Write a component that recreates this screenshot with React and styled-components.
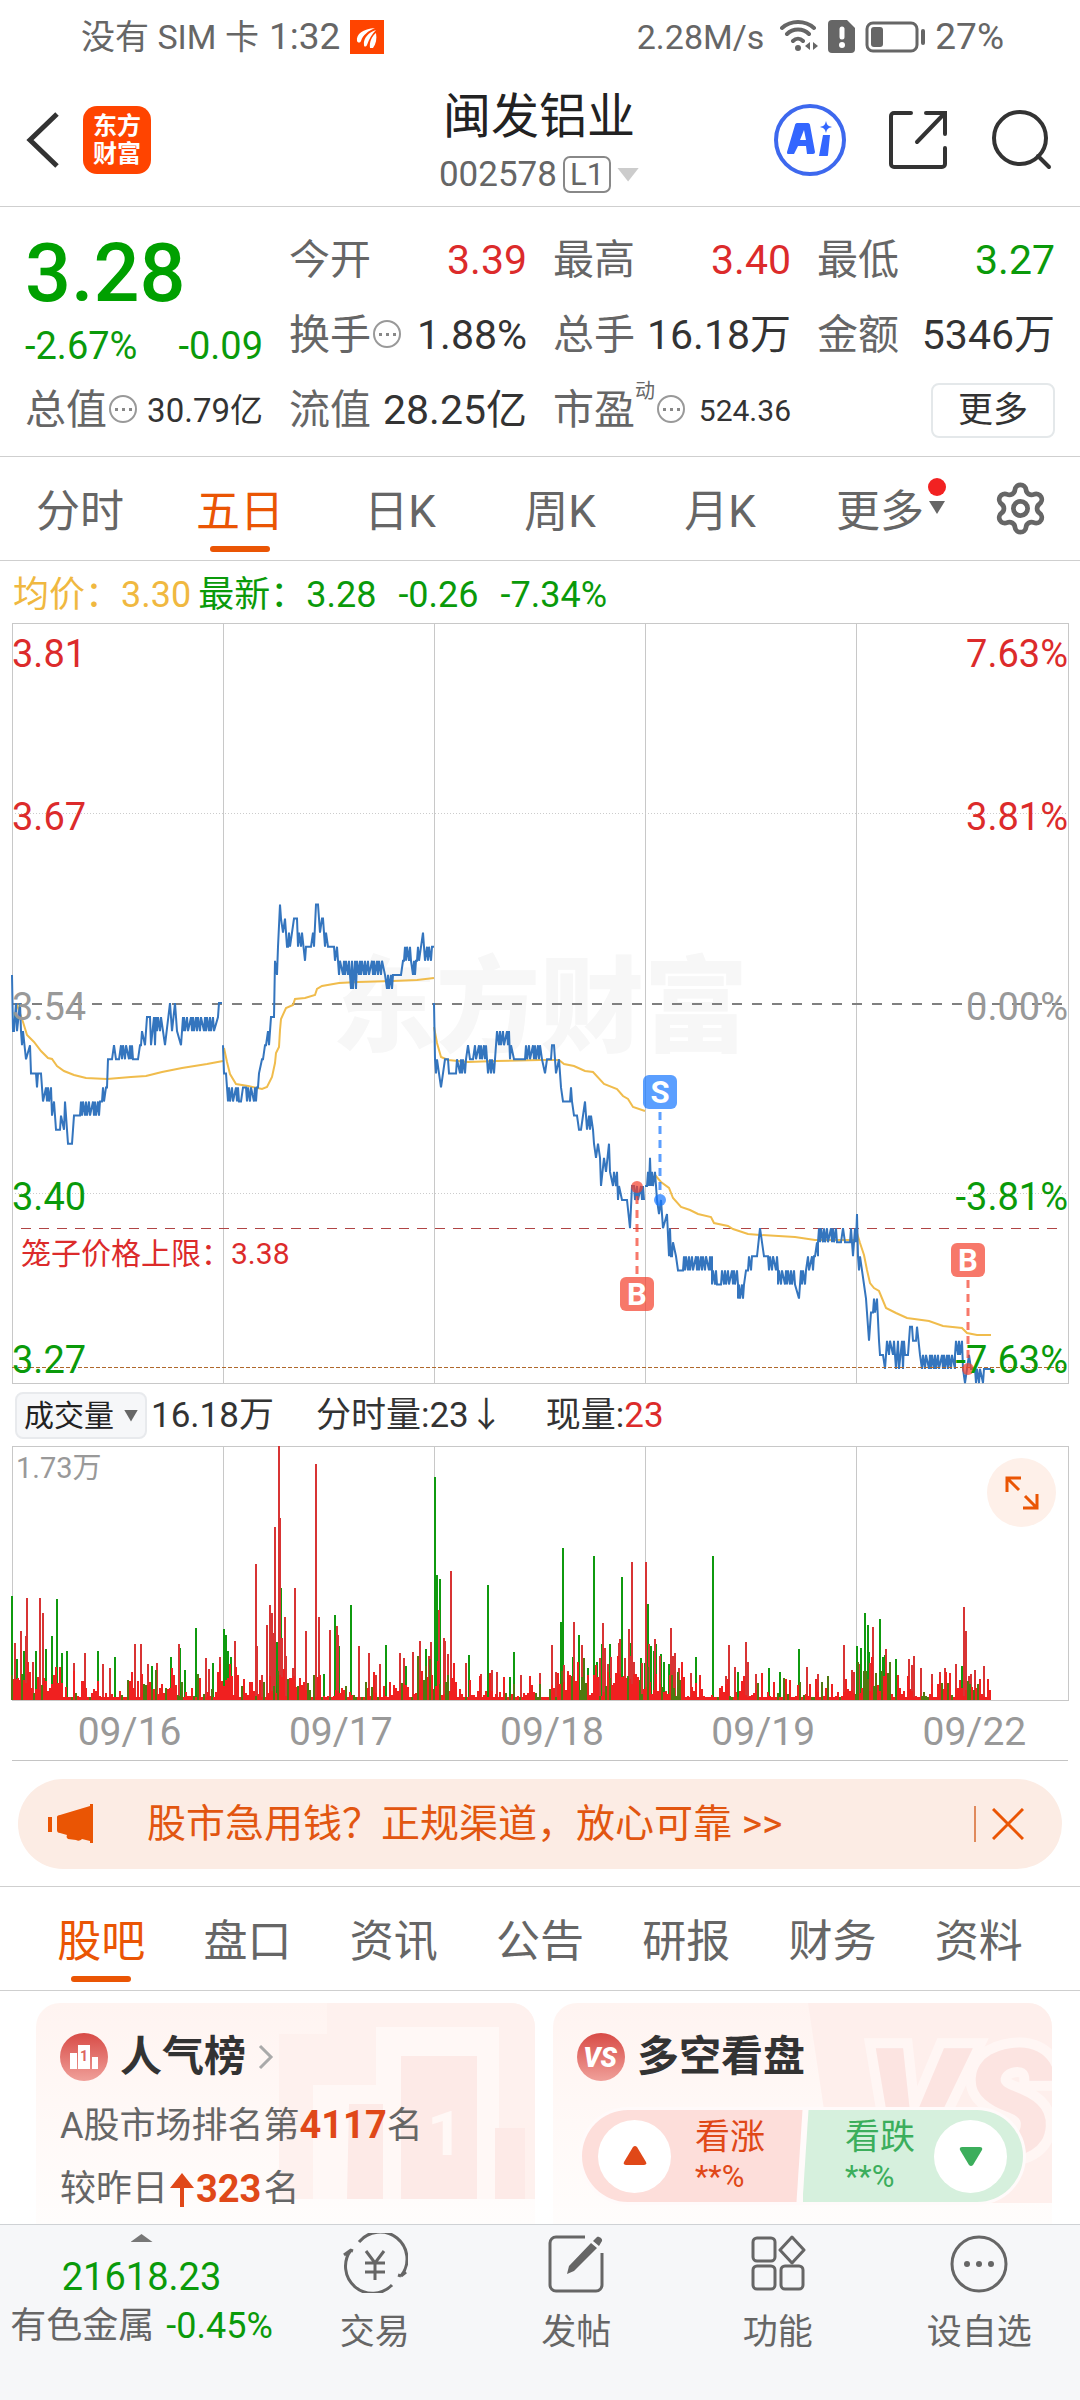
import styled, { createGlobalStyle } from "styled-components";
import { Settings } from "lucide-react";

const RED = "#dc2b2b";
const GREEN = "#0a9a0a";
const ORANGE = "#ea5504";
const GREY = "#666666";
const INK = "#333333";
const LINE = "#cfcfcf";

const GlobalStyle = createGlobalStyle`
  * {
    box-sizing: border-box;
  }
  body {
    margin: 0;
    background: #ffffff;
    color: ${INK};
    font-family: Roboto, "Noto Sans CJK SC", sans-serif;
    line-height: 1.2;
  }
  button, select {
    margin: 0;
    padding: 0;
    border: 0;
    background: none;
    color: inherit;
    font: inherit;
    cursor: pointer;
  }
  h1, h2, p {
    margin: 0;
    font: inherit;
  }
  svg {
    display: block;
    flex: none;
  }
`;

/* ---------- data ---------- */

const CHART_W = 1056;
const PRICE_H = 760;
const VOLUME_H = 254;
const DAY_W = 211;

// [x, price] is a point, [from, to, low, high] is a stretch that flickers between two prices
const PRICES = [
  [
    [0, 356], [1, 352], [2, 8, 352, 354], [9, 352], [10, 12, 351, 352], [14, 350], [18, 351], [19, 349],
    [24, 349], [25, 348], [26, 349], [29, 349], [31, 39, 347, 348], [40, 346], [42, 347], [44, 345], [48, 345],
    [48, 52, 345, 346], [53, 347], [54, 346], [56, 344], [60, 344], [62, 346], [67, 346], [68, 88, 346, 347],
    [90, 94, 347, 348], [95, 348], [96, 350], [100, 350], [102, 351], [104, 350], [107, 120, 350, 351],
    [121, 350], [126, 350], [128, 351], [129, 133, 351, 352], [135, 353], [138, 353], [139, 144, 351, 353],
    [145, 150, 352, 353], [153, 351], [158, 354], [160, 352], [163, 354], [165, 352], [169, 351], [171, 353],
    [171, 203, 352, 353], [206, 353], [207, 354], [210, 354],
  ],
  [
    [211, 351], [212, 349], [214, 349], [216, 228, 347, 348], [229, 347], [231, 348], [234, 348],
    [235, 245, 347, 348], [246, 249, 348, 349], [250, 350], [251, 253, 350, 351], [254, 257, 351, 352],
    [259, 353], [262, 353], [263, 357], [265, 356], [266, 358], [268, 361], [269, 360], [271, 359], [273, 360],
    [275, 358], [276, 280, 358, 359], [282, 360], [285, 360], [286, 290, 358, 359], [293, 357], [294, 358],
    [299, 358], [299, 303, 358, 359], [304, 361], [306, 361], [308, 359], [310, 360], [311, 360],
    [313, 316, 358, 359], [316, 358], [322, 358], [323, 326, 357, 358], [327, 338, 356, 357],
    [339, 346, 355, 357], [347, 373, 356, 357], [375, 382, 355, 356], [383, 356], [389, 356], [391, 357],
    [392, 399, 357, 358], [401, 405, 356, 357], [405, 408, 357, 358], [411, 359], [412, 358],
    [413, 421, 357, 358], [422, 358],
  ],
  [
    [422, 354], [423, 350], [424, 426, 349, 350], [429, 348], [431, 349], [433, 350], [436, 350], [437, 349],
    [442, 349], [444, 453, 349, 350], [454, 350], [456, 351], [458, 350], [461, 475, 350, 351],
    [476, 483, 349, 350], [484, 497, 351, 352], [498, 502, 350, 351], [503, 350], [512, 350],
    [513, 528, 350, 351], [530, 350], [533, 349], [535, 350], [539, 350], [540, 351], [542, 351],
    [544, 547, 349, 350], [549, 348], [551, 347], [557, 347], [558, 561, 347, 348], [562, 564, 346, 347],
    [565, 346], [567, 345], [569, 345], [573, 347], [574, 346], [575, 581, 345, 346], [582, 344],
    [584, 586, 343, 344], [588, 343], [589, 592, 341, 343], [594, 342], [597, 344], [598, 600, 342, 343],
    [601, 605, 341, 342], [606, 610, 340, 341], [611, 340], [615, 340], [618, 338], [620, 341], [622, 341],
    [623, 633, 340, 341],
  ],
  [
    [633, 341], [635, 637, 341, 342], [638, 343], [639, 643, 341, 342], [645, 340], [647, 339],
    [647, 650, 339, 340], [651, 338], [655, 339], [657, 660, 336, 338], [660, 664, 336, 337], [666, 335],
    [670, 335], [671, 700, 335, 336], [700, 705, 334, 335], [706, 334], [709, 334], [709, 726, 334, 335],
    [726, 733, 333, 334], [734, 335], [736, 740, 335, 336], [745, 336], [748, 338], [752, 336], [756, 336],
    [757, 766, 335, 336], [766, 783, 334, 335], [787, 333], [788, 793, 334, 335], [794, 802, 335, 336],
    [803, 806, 336, 337], [806, 824, 337, 338], [825, 337], [829, 337], [831, 338], [833, 337], [838, 337],
    [839, 338], [841, 336], [842, 844, 337, 338], [845, 339],
    [846, 336], [847, 850, 335, 336], [852, 334], [854, 333], [857, 330], [859, 332], [861, 865, 332, 333],
    [867, 330], [868, 329], [871, 329], [873, 328], [874, 883, 329, 330], [884, 892, 328, 330], [893, 329],
    [896, 329], [898, 331], [900, 331], [901, 330], [904, 330], [905, 331], [908, 329],
    [910, 943, 328, 329], [943, 950, 329, 330], [951, 328], [953, 327], [955, 328], [957, 329], [959, 328],
    [963, 328], [964, 972, 327, 328], [973, 328], [979, 328],
  ],
];

const AVERAGES = [
  "5,382 11,399 15,412 22,419 29,428 36,435 40,436 45,443 52,448 62,452 74,455 95,456 119,454 134,453 150,449 170,445 195,441 211,438",
  "212,425 215,439 218,451 224,461 236,463 250,466 255,464 260,454 263,440 264,430 267,424 268,407 269,396 274,385 281,382 283,376 293,375 303,372 305,366 310,363 327,360 346,359 381,358 405,357 422,355",
  "422,404 425,420 429,434 436,437 456,439 484,438 528,437 547,437 552,441 562,443 573,448 581,449 592,461 605,466 611,473 616,476 621,484 633,488",
  "643,552 649,559 657,565 661,575 669,584 678,587 686,591 699,594 702,600 716,603 721,606 736,611 748,612 783,614 803,617 844,617",
  "845,610 848,620 852,632 855,647 858,660 862,665 867,668 874,685 884,690 895,695 917,698 931,703 950,705 955,710 965,712 979,712",
];

const TRADES = [
  { side: "S", x: 648, boxY: 469, dotY: 577, color: "#1677ff" },
  { side: "B", x: 625, boxY: 671, dotY: 564, color: "#f5402c" },
  { side: "B", x: 956, boxY: 637, dotY: 746, color: "#f5402c" },
];

const RISE_BARS = [
  [3, 57], [9, 69], [14, 64], [15, 102], [21, 38], [28, 102], [31, 87], [62, 37], [73, 47], [91, 36], [98, 32],
  [123, 56], [129, 56], [136, 36], [145, 37], [167, 56], [194, 42], [197, 31], [208, 43], [223, 59], [244, 136],
  [245, 54], [250, 25], [255, 75], [258, 95], [260, 87], [262, 67], [263, 173], [267, 254], [268, 182],
  [270, 62], [273, 83], [274, 44], [281, 32], [283, 112], [294, 69], [304, 236], [307, 83], [318, 70],
  [325, 74], [326, 65], [347, 54], [357, 47], [364, 25], [368, 36], [388, 47], [392, 42], [401, 48], [406, 40],
  [408, 59], [417, 44], [419, 58], [427, 90], [432, 62], [433, 59], [436, 46], [439, 129], [442, 23],
  [454, 37], [469, 26], [480, 30], [485, 28], [509, 25], [528, 27], [540, 55], [544, 28], [552, 35], [556, 29],
  [562, 78], [570, 55], [572, 41], [588, 42], [591, 77], [593, 52], [596, 36], [599, 43], [607, 57], [608, 61],
  [613, 42], [617, 71], [619, 44], [620, 138], [622, 38], [630, 37], [634, 138], [637, 56], [643, 61],
  [648, 44], [659, 72], [661, 44], [663, 47], [667, 32], [679, 27], [714, 24], [717, 55], [723, 33], [734, 58],
  [736, 38], [744, 26], [795, 33], [806, 26], [832, 55], [840, 30], [842, 28], [847, 36], [858, 37], [861, 73],
  [874, 51], [897, 41], [900, 35], [902, 44], [909, 32], [920, 26], [928, 28], [933, 32], [944, 36], [952, 93],
  [954, 69], [957, 24], [959, 26], [963, 30], [972, 34],
];

const FALL_BARS = [
  [0, 104], [5, 41], [12, 49], [24, 49], [34, 51], [40, 64], [45, 101], [50, 47], [55, 49], [86, 49],
  [103, 43], [140, 34], [159, 43], [168, 52], [173, 30], [184, 72], [201, 37], [212, 71], [214, 65], [216, 49],
  [219, 43], [265, 58], [269, 112], [308, 22], [312, 26], [323, 85], [327, 54], [339, 95], [374, 55],
  [394, 34], [414, 51], [423, 223], [425, 125], [428, 121], [457, 45], [476, 115], [498, 23], [502, 48],
  [549, 78], [551, 152], [561, 43], [567, 65], [576, 32], [582, 144], [585, 38], [590, 56], [598, 56],
  [610, 123], [618, 57], [629, 42], [633, 37], [636, 96], [639, 54], [642, 49], [644, 56], [649, 46],
  [652, 38], [657, 36], [684, 43], [701, 144], [726, 28], [757, 32], [768, 28], [787, 51], [845, 54],
  [849, 52], [853, 87], [856, 75], [857, 48], [868, 81], [871, 43], [873, 45], [884, 41], [950, 34],
];

// stretches where trading is busier than usual: [from, to, extra height]
const BUSY = [
  [0, 50, 24], [130, 170, 12], [200, 225, 20], [255, 283, 30], [405, 442, 32], [545, 670, 24], [845, 880, 26],
  [945, 966, 16],
];

const QUOTES = [
  { label: "今开", value: "3.39", color: RED },
  { label: "最高", value: "3.40", color: RED },
  { label: "最低", value: "3.27", color: GREEN },
  { label: "换手", value: "1.88%", info: true },
  { label: "总手", value: "16.18万" },
  { label: "金额", value: "5346万" },
  { label: "总值", value: "30.79亿", info: true, size: 33 },
  { label: "流值", value: "28.25亿" },
  { label: "市盈", mark: "动", value: "524.36", info: true, size: 30 },
];

const PERIODS = ["分时", "五日", "日K", "周K", "月K", "更多"];
const DATES = ["09/16", "09/17", "09/18", "09/19", "09/22"];
const SECTIONS = ["股吧", "盘口", "资讯", "公告", "研报", "财务", "资料"];

/* ---------- chart helpers ---------- */

const priceY = (cents) => ((381 - cents) * PRICE_H) / 54;

const FLICKER = [1, 1, 2, 1, 3, 1, 1, 1, 2];

function pricePoints(day) {
  const points = [];
  day.forEach((item) => {
    if (item.length === 2) {
      points.push([item[0], item[1]]);
      return;
    }
    const [from, to, low, high] = item;
    let up = false;
    for (let x = from, i = from; x <= to; x += FLICKER[i % FLICKER.length], i += 1) {
      points.push([x, up ? high : low]);
      up = !up;
    }
  });
  return points.map(([x, cents]) => `${x},${priceY(cents).toFixed(1)}`).join(" ");
}

function quietBars() {
  const bars = [];
  let seed = 7;
  const random = () => {
    seed = (seed * 16807) % 2147483647;
    return seed / 2147483647;
  };
  for (let x = 0; x <= 979; x += 2) {
    const busy = BUSY.find(([from, to]) => x >= from && x <= to);
    const height = 3 + random() ** 4 * 26 + (busy ? random() * busy[2] : 0);
    const fall = random() < (busy ? 0.34 : 0.2);
    bars.push([x, Math.round(height), fall ? "#4f7a10" : "#f02020"]);
  }
  return bars;
}

const barPath = (bars) => bars.map(([x, h]) => `M${x} ${VOLUME_H}v${-h}`).join("");

/* ---------- layout ---------- */

const Page = styled.div`
  min-height: 100vh;
  display: flex;
  flex-direction: column;
`;

const StatusBar = styled.div`
  height: 75px;
  padding: 0 76px 0 81px;
  display: flex;
  align-items: center;
  justify-content: space-between;
  color: ${GREY};
`;

const StatusGroup = styled.div`
  display: flex;
  align-items: center;
  gap: 10px;
  font-size: 34px;
`;

const StatusStrong = styled.span`
  font-size: 37px;
`;

const NetSpeed = styled.span`
  margin-right: 6px;
`;

const Header = styled.header`
  height: 132px;
  padding: 0 28px 0 26px;
  display: grid;
  grid-template-columns: 1fr auto 1fr;
  align-items: center;
  border-bottom: 1px solid ${LINE};
`;

const HeaderSide = styled.div`
  display: flex;
  align-items: center;
  gap: ${(p) => p.$gap}px;
  padding-bottom: 2px;
  justify-content: ${(p) => (p.$end ? "flex-end" : "flex-start")};
`;

const BrandLogo = styled.a`
  width: 68px;
  height: 68px;
  border-radius: 14px;
  background: #ff4400;
  color: #ffffff;
  display: flex;
  align-items: center;
  justify-content: center;
  text-align: center;
  text-decoration: none;
  font-size: 24px;
  font-weight: 700;
  line-height: 28px;
`;

const TitleBlock = styled.div`
  padding-top: 5px;
  display: flex;
  flex-direction: column;
  align-items: center;
  gap: 3px;
`;

const StockName = styled.h1`
  font-size: 48px;
  line-height: 60px;
  color: #222222;
`;

const StockCode = styled.button`
  display: flex;
  align-items: center;
  gap: 6px;
  font-size: 35px;
  line-height: 50px;
  color: ${GREY};
`;

const LevelTag = styled.span`
  padding: 0 5px;
  border: 2px solid #888888;
  border-radius: 7px;
  font-size: 31px;
  line-height: 33px;
`;

const Triangle = styled.span`
  width: ${(p) => p.$size * 2}px;
  height: ${(p) => p.$tall || p.$size * 2}px;
  background: ${(p) => p.$color};
  clip-path: ${(p) => (p.$up ? "polygon(50% 0, 100% 100%, 0 100%)" : "polygon(0 0, 100% 0, 50% 100%)")};
`;

const QuotePanel = styled.section`
  padding: 16px 25px 8px;
  display: grid;
  grid-template-columns: repeat(4, 1fr);
  grid-auto-rows: 75px;
  column-gap: 26px;
  border-bottom: 1px solid ${LINE};
`;

const LastPrice = styled.div`
  grid-row: span 2;
  display: flex;
  flex-direction: column;
  padding-top: 5px;
  color: ${GREEN};
`;

const BigPrice = styled.strong`
  font-size: 81px;
  font-weight: 500;
  line-height: 92px;
  color: #00a000;
`;

const Change = styled.div`
  display: flex;
  justify-content: space-between;
  font-size: 38px;
  line-height: 52px;
`;

const Quote = styled.div`
  display: flex;
  align-items: center;
  white-space: nowrap;
`;

const QuoteLabel = styled.span`
  font-size: 41px;
  color: ${GREY};
`;

const QuoteMark = styled.sup`
  align-self: flex-start;
  font-size: 20px;
  line-height: 36px;
  color: ${GREY};
`;

const QuoteValue = styled.span`
  margin-left: auto;
  font-size: ${(p) => p.$size || 41}px;
  color: ${(p) => p.$color || INK};
`;

const MoreButton = styled.button`
  justify-self: end;
  align-self: center;
  width: 124px;
  height: 55px;
  border: 2px solid #e4e8ea;
  border-radius: 8px;
  font-size: 35px;
`;

const Periods = styled.nav`
  height: 104px;
  display: grid;
  grid-template-columns: repeat(6, 4fr) 3fr;
  border-bottom: 1px solid ${LINE};
`;

const Tab = styled.button`
  position: relative;
  padding-top: 8px;
  font-size: 44px;
  color: ${(p) => (p.$active ? ORANGE : GREY)};

  &::after {
    content: "";
    position: absolute;
    left: 50%;
    bottom: 8px;
    width: 60px;
    height: 6px;
    margin-left: -30px;
    border-radius: 3px;
    background: ${(p) => (p.$active ? ORANGE : "transparent")};
  }
`;

const TabBadge = styled.span`
  position: absolute;
  top: 21px;
  right: 14px;
  display: flex;
  flex-direction: column;
  align-items: center;
  gap: 5px;
`;

const NewDot = styled.span`
  width: 18px;
  height: 18px;
  border-radius: 50%;
  background: #f22222;
`;

const IconButton = styled.button`
  display: flex;
  align-items: center;
  justify-content: center;
  color: ${(p) => p.$color || INK};
`;

const PriceLegend = styled.div`
  height: 62px;
  padding: 7px 13px 0;
  display: flex;
  align-items: center;
  font-size: 36px;
  color: ${GREEN};
`;

const LegendAverage = styled.span`
  margin-right: 7px;
  color: #f0b840;
`;

const LegendItem = styled.span`
  margin-right: 22px;
`;

const ChartFrame = styled.div`
  position: relative;
  margin: 0 12px;
`;

const ChartSvg = styled.svg`
  position: relative;
  width: 100%;
  height: ${(p) => p.$height}px;
  overflow: visible;
`;

const Watermark = styled.div`
  position: absolute;
  inset: 0;
  padding-top: 12px;
  display: flex;
  align-items: center;
  justify-content: center;
  font-size: 104px;
  font-weight: 900;
  color: #f7f7f7;
`;

const Axis = styled.div`
  position: absolute;
  inset: 0;
  padding: 8px 0 0;
  display: grid;
  grid-template-rows: 91fr 190fr 190fr 190fr 91fr;
  align-items: center;
  justify-items: ${(p) => p.$side};
  pointer-events: none;
  font-size: 38px;
  line-height: 46px;
`;

const AxisLabel = styled.span`
  color: ${(p) => p.$color};

  &:first-child {
    align-self: start;
  }
  &:last-child {
    align-self: end;
  }
`;

const CageLabel = styled.span`
  position: absolute;
  left: 9px;
  top: 613px;
  font-size: 30px;
  line-height: 36px;
  color: ${RED};
`;

const VolumeLegend = styled.div`
  height: 63px;
  padding: 2px 15px 0;
  display: flex;
  align-items: center;
  font-size: 35px;
`;

const SelectBox = styled.label`
  position: relative;
  display: flex;
  align-items: center;
  margin-right: 4px;

  ${Triangle} {
    position: absolute;
    right: 9px;
    pointer-events: none;
  }
`;

const Select = styled.select`
  appearance: none;
  width: 132px;
  height: 47px;
  padding-left: 7px;
  border: 2px solid #e8eaed;
  border-radius: 8px;
  background: #f6f7f9;
  font-size: 30px;
  color: #222222;
`;

const VolumeItem = styled.span`
  margin-right: 42px;
  color: ${INK};

  b {
    font-weight: 400;
    color: ${RED};
  }
`;

const VolumeMax = styled.span`
  position: absolute;
  left: 4px;
  top: 4px;
  font-size: 29px;
  line-height: 36px;
  color: #999999;
`;

const ExpandButton = styled(IconButton)`
  position: absolute;
  right: 12px;
  top: 12px;
  width: 69px;
  height: 69px;
  border-radius: 50%;
  background: #fef0e9;
  color: ${ORANGE};
`;

const DateRow = styled.div`
  margin: 0 12px;
  height: 61px;
  padding-top: 5px;
  display: grid;
  grid-template-columns: repeat(5, 1fr);
  align-items: center;
  border-bottom: 1px solid #c4c4c4;
  font-size: 39px;
  color: #999999;

  span {
    padding-left: 24px;
    text-align: center;
  }
`;

const BannerWrap = styled.div`
  padding: 18px 18px 17px;
  border-bottom: 1px solid ${LINE};
`;

const Banner = styled.div`
  height: 90px;
  padding: 0 38px 0 30px;
  display: flex;
  align-items: center;
  border-radius: 45px;
  background: #fcece4;
  color: #e25610;
`;

const BannerLink = styled.a`
  flex: 1;
  margin-left: 53px;
  font-size: 39px;
  color: inherit;
  text-decoration: none;
`;

const BannerClose = styled(IconButton)`
  height: 36px;
  padding-left: 16px;
  border-left: 2px solid #e08a5c;
  color: ${ORANGE};
`;

const SectionTabs = styled(Periods)`
  padding: 0 28px;
  grid-template-columns: repeat(7, 1fr);
`;

const Cards = styled.section`
  flex: 1;
  padding: 12px 28px 0 36px;
  display: grid;
  grid-template-columns: 1fr 1fr;
  gap: 18px;
`;

const Card = styled.article`
  position: relative;
  overflow: hidden;
  padding: 30px 24px 0;
  border-radius: 24px 24px 0 0;
  background: linear-gradient(#fff4f1, #fffdfc);
`;

const CardArt = styled.svg`
  position: absolute;
  top: 0;
  right: 0;
`;

const CardTitle = styled.h2`
  position: relative;
  margin-bottom: 13px;
  display: flex;
  align-items: center;
  gap: 12px;
  font-size: 42px;
  font-weight: 700;
  line-height: 48px;
`;

const RankLine = styled.p`
  position: relative;
  display: flex;
  align-items: center;
  gap: 2px;
  font-size: 36px;
  line-height: 63px;
  color: ${GREY};

  b {
    font-size: 38px;
    color: #e04818;
  }
`;

const Vote = styled.div`
  position: relative;
  margin: 26px 2px 0;
  padding: 3px;
  height: 98px;
  display: grid;
  grid-template-columns: 1fr 1fr;
  border-radius: 49px;
  background: #fffafa;
`;

const VoteButton = styled.button`
  padding: 0 16px;
  display: flex;
  flex-direction: ${(p) => (p.$up ? "row" : "row-reverse")};
  align-items: center;
  gap: ${(p) => (p.$up ? 24 : 19)}px;
  border-radius: ${(p) => (p.$up ? "46px 0 0 46px" : "0 46px 46px 0")};
  background: ${(p) => (p.$up ? "#fddeda" : "#d6f0dd")};
  color: ${(p) => (p.$up ? "#e04818" : "#3cae5c")};
  clip-path: ${(p) =>
    p.$up ? "polygon(0 0, 100% 0, calc(100% - 6px) 100%, 0 100%)" : "polygon(6px 0, 100% 0, 100% 100%, 0 100%)"};
`;

const VoteDisc = styled.span`
  width: 73px;
  height: 73px;
  display: flex;
  align-items: center;
  justify-content: center;
  border-radius: 50%;
  background: #ffffff;
`;

const VoteText = styled.span`
  display: flex;
  flex-direction: column;
  text-align: left;
  font-size: 35px;
  line-height: 42px;

  small {
    font-size: 31px;
    line-height: 36px;
  }
`;

const BottomBar = styled.nav`
  height: 176px;
  display: grid;
  grid-template-columns: 274px repeat(4, 1fr);
  border-top: 1px solid #cfd2d5;
  background: #f6f7f9;
`;

const IndexButton = styled.button`
  padding: 9px 0 0 9px;
  display: flex;
  flex-direction: column;
  align-items: center;
  white-space: nowrap;
  font-size: 38px;
  color: ${GREEN};
`;

const IndexValue = styled.span`
  margin-top: 10px;
  line-height: 50px;
`;

const IndexName = styled.span`
  display: flex;
  gap: 12px;
  font-size: 36px;
  line-height: 48px;

  span {
    color: ${GREY};
  }
`;

const BottomItem = styled.button`
  padding-top: 8px;
  display: flex;
  flex-direction: column;
  align-items: center;
  gap: 14px;
  font-size: 35px;
  line-height: 52px;
  color: ${GREY};
`;

/* ---------- icons ---------- */

function AppIcon() {
  return (
    <svg width="34" height="34" viewBox="0 0 34 34">
      <rect width="34" height="34" fill="#ff4400" />
      <path d="M7 21c-1-7 6-12 18-13-7 3-12 7-14 13-1 2-3 2-4 0z" fill="#fff" />
      <path d="M14 25c-1-7 5-13 12-15-4 4-7 9-9 15-1 2-3 2-3 0z" fill="#fff" />
      <path d="M20 28c-1-6 2-12 6-15 1 6 0 11-3 15z" fill="#fff" />
    </svg>
  );
}

function WifiIcon() {
  return (
    <svg width="38" height="34" viewBox="0 0 38 34" fill="none" stroke="currentColor" strokeWidth="4" strokeLinecap="round">
      <path d="M2 8c9-8 23-8 32 0M7 14c6-6 16-6 22 0M13 21c3-3 7-3 10 0" />
      <circle cx="18" cy="28" r="3" fill="currentColor" stroke="none" />
      <path d="M30 22v8l-5-4zM33 22v8l5-4z" fill="currentColor" stroke="none" />
    </svg>
  );
}

function SimIcon() {
  return (
    <svg width="27" height="34" viewBox="0 0 27 34">
      <path d="M4 0h15l8 8v21a4 4 0 0 1-4 4H4a4 4 0 0 1-4-4V4a4 4 0 0 1 4-4z" fill="currentColor" />
      <path d="M14 9v8" stroke="#fff" strokeWidth="5" strokeLinecap="round" />
      <circle cx="14" cy="25" r="3" fill="#fff" />
    </svg>
  );
}

function BatteryIcon() {
  return (
    <svg width="60" height="32" viewBox="0 0 60 32">
      <rect x="2" y="2" width="50" height="28" rx="6" fill="none" stroke="currentColor" strokeWidth="3" />
      <rect x="6" y="6" width="12" height="20" rx="3" fill="currentColor" />
      <rect x="56" y="8" width="4" height="16" rx="2" fill="currentColor" />
    </svg>
  );
}

function BackIcon() {
  return (
    <svg width="33" height="56" viewBox="0 0 33 56" fill="none" stroke="currentColor" strokeWidth="5">
      <path d="M31 2L4 28l27 26" />
    </svg>
  );
}

function AiIcon() {
  return (
    <svg width="72" height="72" viewBox="0 0 72 72">
      <circle cx="36" cy="36" r="34" fill="none" stroke="#3d68ee" strokeWidth="4" />
      <path
        d="M23 19h11c1 0 2 1 2 2l5 27c0 1-1 2-2 2h-6l-1-8h-8l-4 8h-6c-1 0-1-1-1-2l8-27c0-1 1-2 2-2zM30 26l-4 10h6z"
        fill="#3366ff"
        fillRule="evenodd"
      />
      <path d="M49 31h7l-2 20c0 1-1 1-1 1h-8zM52 17c1 4 2 5 6 6-4 1-5 2-6 6-1-4-2-5-6-6 4-1 5-2 6-6z" fill="#3366ff" />
    </svg>
  );
}

function ShareIcon() {
  return (
    <svg width="58" height="58" viewBox="0 0 58 58" fill="none" stroke="currentColor" strokeWidth="4" strokeLinecap="round">
      <path d="M22 2H5a3 3 0 0 0-3 3v48a3 3 0 0 0 3 3h48a3 3 0 0 0 3-3V37" />
      <path d="M37 2h19v21M54 4L28 31" />
    </svg>
  );
}

function SearchIcon() {
  return (
    <svg width="62" height="60" viewBox="-2 0 62 60" fill="none" stroke="currentColor" strokeWidth="4" strokeLinecap="round">
      <circle cx="28" cy="28" r="26" />
      <path d="M46 46l11 11" />
    </svg>
  );
}

function InfoIcon() {
  return (
    <svg width="31" height="31" viewBox="0 0 31 31">
      <circle cx="16" cy="14" r="13" fill="none" stroke="#999" strokeWidth="2" />
      <path d="M8 13h3v3H8zM15 13h3v3h-3zM22 13h3v3h-3z" fill="#888" />
    </svg>
  );
}

function ExpandIcon() {
  return (
    <svg width="34" height="34" viewBox="0 0 34 34" fill="none" stroke="currentColor" strokeWidth="3">
      <path d="M2 16V2h14M2 2l12 12M32 18v14H18M32 32L20 20" />
    </svg>
  );
}

function HornIcon() {
  return (
    <svg width="46" height="40" viewBox="0 0 46 40" fill={ORANGE}>
      <path d="M0 13h4v15H0zM9 13c0-1 1-2 3-2L42 2V0h3v39h-3v-2l-8-2c-2 2-4 2-6 1l-8-1c-1-1-2-2-1-4l-7-2c-2 0-3-1-3-3z" />
    </svg>
  );
}

function CloseIcon() {
  return (
    <svg width="32" height="32" viewBox="0 0 32 32" fill="none" stroke="currentColor" strokeWidth="3">
      <path d="M1 1l30 30M31 1L1 31" />
    </svg>
  );
}

function CardBadge({ id, children }) {
  return (
    <svg width="48" height="48" viewBox="0 0 48 48">
      <defs>
        <linearGradient id={id} x1="0" y1="0" x2="0" y2="1">
          <stop offset="0" stopColor="#d84b46" />
          <stop offset="1" stopColor="#f0a09a" />
        </linearGradient>
      </defs>
      <circle cx="24" cy="24" r="24" fill={`url(#${id})`} />
      {children}
    </svg>
  );
}

function TradeIcon() {
  return (
    <svg width="66" height="60" viewBox="0 0 66 60" fill="none" stroke="currentColor" strokeWidth="3">
      <path d="M17 9a27 27 0 0 1 42 34l5-4M59 43l-3-1" />
      <path d="M50 52A27 27 0 0 1 9 17l-7 5M8 17l3 1" />
      <path d="M24 18l9 12 9-12M23 30h20M23 39h20M33 30v17" />
    </svg>
  );
}

function PostIcon() {
  return (
    <svg width="56" height="60" viewBox="0 0 56 60" fill="none" stroke="currentColor" strokeWidth="3">
      <path d="M37 4H8a6 6 0 0 0-6 6v42a6 6 0 0 0 6 6h40a6 6 0 0 0 6-6V20" />
      <path d="M43 10l6 5-23 23-7 3 2-8zM45 8l4-4c2-1 6 2 5 4l-3 5z" fill="currentColor" stroke="none" />
    </svg>
  );
}

function FunctionsIcon() {
  return (
    <svg width="56" height="60" viewBox="0 0 56 60" fill="none" stroke="currentColor" strokeWidth="3">
      <rect x="3" y="5" width="22" height="23" rx="4" />
      <rect x="3" y="33" width="22" height="23" rx="4" />
      <rect x="31" y="33" width="22" height="23" rx="4" />
      <path d="M42 4l12 13-12 13-12-13z" strokeLinejoin="round" />
    </svg>
  );
}

function EllipsisIcon() {
  return (
    <svg width="58" height="60" viewBox="0 0 58 60">
      <circle cx="29" cy="31" r="27" fill="none" stroke="currentColor" strokeWidth="3" />
      <g fill="currentColor">
        <circle cx="17" cy="31" r="3" />
        <circle cx="29" cy="31" r="3" />
        <circle cx="41" cy="31" r="3" />
      </g>
    </svg>
  );
}

/* ---------- charts ---------- */

function DayGrid({ height }) {
  return (
    <g fill="none" stroke="#c8c8c8" strokeWidth="1" shapeRendering="crispEdges">
      <rect x="0" y="0" width={CHART_W} height={height} />
      {[1, 2, 3, 4].map((day) => (
        <path key={day} d={`M${day * DAY_W} 0V${height}`} />
      ))}
    </g>
  );
}

function PriceChart() {
  return (
    <ChartFrame>
      <Watermark>东方财富</Watermark>
      <ChartSvg $height={PRICE_H} viewBox={`0 0 ${CHART_W} ${PRICE_H}`} preserveAspectRatio="none">
        <DayGrid height={PRICE_H} />
        <g shapeRendering="crispEdges">
          <path d="M0 190H1056M0 570H1056" stroke="#cccccc" strokeDasharray="1 2" />
          <path d="M0 381H1056" stroke="#808080" strokeWidth="2" strokeDasharray="10 10" />
          <path d="M9 605H1046" stroke="#b04444" strokeDasharray="10 8" />
        </g>
        {AVERAGES.map((points) => (
          <polyline key={points} points={points} fill="none" stroke="#f0bc4c" strokeWidth="2" />
        ))}
        {PRICES.map((day) => (
          <polyline key={day[0][0]} points={pricePoints(day)} fill="none" stroke="#3475be" strokeWidth="2" />
        ))}
        <path d="M0 744H1056" stroke="#b0682c" strokeDasharray="4 2" shapeRendering="crispEdges" />
        {TRADES.map(({ side, x, boxY, dotY, color }) => (
          <g key={x} opacity="0.7">
            <path d={`M${x} ${boxY + (boxY < dotY ? 20 : -20)}V${dotY}`} stroke={color} strokeWidth="3" strokeDasharray="8 6" />
            <circle cx={x} cy={dotY} r="6" fill={color} />
            <rect x={x - 17} y={boxY - 17} width="34" height="34" rx="6" fill={color} />
            <text x={x} y={boxY + 11} textAnchor="middle" fontSize="31" fontWeight="700" fill="#fff">
              {side}
            </text>
          </g>
        ))}
      </ChartSvg>
      <Axis $side="start">
        <AxisLabel $color={RED}>3.81</AxisLabel>
        <AxisLabel $color={RED}>3.67</AxisLabel>
        <AxisLabel $color="#999999">3.54</AxisLabel>
        <AxisLabel $color={GREEN}>3.40</AxisLabel>
        <AxisLabel $color={GREEN}>3.27</AxisLabel>
      </Axis>
      <Axis $side="end">
        <AxisLabel $color={RED}>7.63%</AxisLabel>
        <AxisLabel $color={RED}>3.81%</AxisLabel>
        <AxisLabel $color="#999999">0.00%</AxisLabel>
        <AxisLabel $color={GREEN}>-3.81%</AxisLabel>
        <AxisLabel $color={GREEN}>-7.63%</AxisLabel>
      </Axis>
      <CageLabel>笼子价格上限：3.38</CageLabel>
    </ChartFrame>
  );
}

function VolumeChart() {
  return (
    <ChartFrame>
      <ChartSvg $height={VOLUME_H} viewBox={`0 0 ${CHART_W} ${VOLUME_H}`} preserveAspectRatio="none">
        <DayGrid height={VOLUME_H} />
        <path d={barPath(FALL_BARS)} stroke="#0f9a0f" strokeWidth="2" />
        <path d={barPath(RISE_BARS)} stroke="#d83434" strokeWidth="2" />
        {quietBars().map(([x, h, color]) => (
          <path key={x} d={`M${x} ${VOLUME_H}v${-h}`} stroke={color} strokeWidth="2" />
        ))}
      </ChartSvg>
      <VolumeMax>1.73万</VolumeMax>
      <ExpandButton aria-label="全屏">
        <ExpandIcon />
      </ExpandButton>
    </ChartFrame>
  );
}

/* ---------- page ---------- */

function QuoteCell({ label, mark, info, value, color, size }) {
  return (
    <Quote>
      <QuoteLabel>{label}</QuoteLabel>
      {mark && <QuoteMark>{mark}</QuoteMark>}
      {info && <InfoIcon />}
      <QuoteValue $color={color} $size={size}>
        {value}
      </QuoteValue>
    </Quote>
  );
}

function App() {
  return (
    <Page>
      <GlobalStyle />
      <StatusBar>
        <StatusGroup>
          <span>没有 SIM 卡</span>
          <StatusStrong>1:32</StatusStrong>
          <AppIcon />
        </StatusGroup>
        <StatusGroup>
          <NetSpeed>2.28M/s</NetSpeed>
          <WifiIcon />
          <SimIcon />
          <BatteryIcon />
          <StatusStrong>27%</StatusStrong>
        </StatusGroup>
      </StatusBar>

      <Header>
        <HeaderSide $gap={24}>
          <IconButton aria-label="返回">
            <BackIcon />
          </IconButton>
          <BrandLogo href="#home">
            东方
            <br />
            财富
          </BrandLogo>
        </HeaderSide>
        <TitleBlock>
          <StockName>闽发铝业</StockName>
          <StockCode>
            002578
            <LevelTag>L1</LevelTag>
            <Triangle $size={11} $tall={14} $color="#cccccc" />
          </StockCode>
        </TitleBlock>
        <HeaderSide $gap={43} $end>
          <IconButton aria-label="AI">
            <AiIcon />
          </IconButton>
          <IconButton aria-label="分享">
            <ShareIcon />
          </IconButton>
          <IconButton aria-label="搜索">
            <SearchIcon />
          </IconButton>
        </HeaderSide>
      </Header>

      <QuotePanel>
        <LastPrice>
          <BigPrice>3.28</BigPrice>
          <Change>
            <span>-2.67%</span>
            <span>-0.09</span>
          </Change>
        </LastPrice>
        {QUOTES.map((quote) => (
          <QuoteCell key={quote.label} {...quote} />
        ))}
        <MoreButton>更多</MoreButton>
      </QuotePanel>

      <Periods>
        {PERIODS.map((name) => (
          <Tab key={name} $active={name === "五日"}>
            {name}
            {name === "更多" && (
              <TabBadge>
                <NewDot />
                <Triangle $size={8} $tall={13} $color={GREY} />
              </TabBadge>
            )}
          </Tab>
        ))}
        <IconButton aria-label="设置" $color={GREY}>
          <Settings size={57} strokeWidth={2} />
        </IconButton>
      </Periods>

      <PriceLegend>
        <LegendAverage>均价：3.30</LegendAverage>
        <LegendItem>最新：3.28</LegendItem>
        <LegendItem>-0.26</LegendItem>
        <LegendItem>-7.34%</LegendItem>
      </PriceLegend>
      <PriceChart />

      <VolumeLegend>
        <SelectBox>
          <Select aria-label="指标" defaultValue="成交量">
            <option>成交量</option>
          </Select>
          <Triangle $size={7} $tall={12} $color={GREY} />
        </SelectBox>
        <VolumeItem>16.18万</VolumeItem>
        <VolumeItem>分时量:23↓</VolumeItem>
        <VolumeItem>
          现量:<b>23</b>
        </VolumeItem>
      </VolumeLegend>
      <VolumeChart />
      <DateRow>
        {DATES.map((date) => (
          <span key={date}>{date}</span>
        ))}
      </DateRow>

      <BannerWrap>
        <Banner>
          <HornIcon />
          <BannerLink href="#promo">股市急用钱？正规渠道，放心可靠 &gt;&gt;</BannerLink>
          <BannerClose aria-label="关闭">
            <CloseIcon />
          </BannerClose>
        </Banner>
      </BannerWrap>

      <SectionTabs>
        {SECTIONS.map((name) => (
          <Tab key={name} $active={name === "股吧"}>
            {name}
          </Tab>
        ))}
      </SectionTabs>

      <Cards>
        <Card>
          <CardArt width="260" height="200" viewBox="0 0 260 200">
            <path d="M52 0h208v196H4V31h48z" fill="#fef1ee" />
            <path d="M101 24h123v172H38V82h63z" fill="#fff8f6" />
            <path d="M126 53h76v143h-76zM74 101h34v95H72zM220 125h30v71h-30z" fill="#fdeae7" />
            <text x="170" y="152" textAnchor="middle" fontSize="62" fontWeight="700" fill="#fff8f6">
              1
            </text>
          </CardArt>
          <CardTitle>
            <CardBadge id="rank-badge">
              <path d="M10 20h7v16h-7zM18 12h12v24H18zM32 24h6v12h-6z" fill="#fff" />
              <text x="24" y="28" textAnchor="middle" fontSize="14" fontWeight="700" fill="#dd6660">
                1
              </text>
            </CardBadge>
            人气榜
            <svg width="16" height="26" viewBox="0 0 16 26" fill="none" stroke="#aaaaaa" strokeWidth="3">
              <path d="M2 2l11 11L2 24" />
            </svg>
          </CardTitle>
          <RankLine>
            <span>
              A股市场排名第<b>4117</b>名
            </span>
          </RankLine>
          <RankLine>
            较昨日
            <svg width="24" height="34" viewBox="0 0 24 34" fill="#e04818">
              <path d="M12 0l12 15H14v19h-4V15H0z" />
            </svg>
            <b>323</b> 名
          </RankLine>
        </Card>
        <Card>
          <CardArt width="244" height="200" viewBox="0 0 244 200">
            <path d="M0 0h244v200H30z" fill="#feefec" />
            <text
              x="58"
              y="152"
              fontSize="150"
              fontWeight="900"
              fontStyle="italic"
              fill="#fce4e1"
              stroke="#fff6f4"
              strokeWidth="20"
              paintOrder="stroke"
            >
              VS
            </text>
          </CardArt>
          <CardTitle>
            <CardBadge id="vote-badge">
              <text x="23" y="34" textAnchor="middle" fontSize="27" fontWeight="900" fontStyle="italic" fill="#fff">
                VS
              </text>
            </CardBadge>
            多空看盘
          </CardTitle>
          <Vote>
            <VoteButton $up>
              <VoteDisc>
                <svg width="24" height="20" viewBox="0 0 24 20" fill="currentColor">
                  <path d="M10 1q2-2 4 0l9 15q1 3-2 3H3q-3 0-2-3z" />
                </svg>
              </VoteDisc>
              <VoteText>
                看涨<small>**%</small>
              </VoteText>
            </VoteButton>
            <VoteButton>
              <VoteDisc>
                <svg width="24" height="20" viewBox="0 0 24 20" fill="currentColor">
                  <path d="M10 19q2 2 4 0l9-15q1-3-2-3H3Q0 1 1 4z" />
                </svg>
              </VoteDisc>
              <VoteText>
                看跌<small>**%</small>
              </VoteText>
            </VoteButton>
          </Vote>
        </Card>
      </Cards>

      <BottomBar>
        <IndexButton>
          <Triangle $size={11} $tall={8} $color="#777777" $up />
          <IndexValue>21618.23</IndexValue>
          <IndexName>
            <span>有色金属</span>-0.45%
          </IndexName>
        </IndexButton>
        <BottomItem>
          <TradeIcon />
          交易
        </BottomItem>
        <BottomItem>
          <PostIcon />
          发帖
        </BottomItem>
        <BottomItem>
          <FunctionsIcon />
          功能
        </BottomItem>
        <BottomItem>
          <EllipsisIcon />
          设自选
        </BottomItem>
      </BottomBar>
    </Page>
  );
}

export default App;
